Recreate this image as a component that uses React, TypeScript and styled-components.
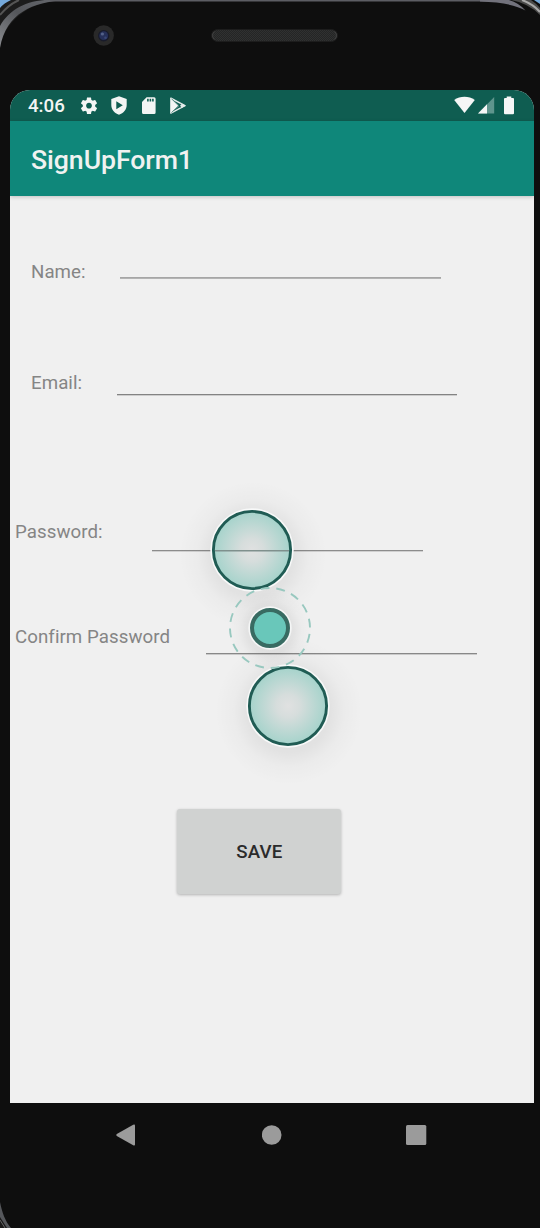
import React from 'react';
import styled, { createGlobalStyle } from 'styled-components';

const GlobalStyle = createGlobalStyle`
  html, body { margin: 0; padding: 0; background: #0e0e0e; }
  * { box-sizing: border-box; }
`;

const Phone = styled.div`
  position: relative;
  display: flex;
  flex-direction: column;
  width: 540px;
  height: 1228px;
  padding: 0 6px 0 10px;
  overflow: hidden;
  background: #0e0e0e;
  font-family: Roboto, "Liberation Sans", sans-serif;
`;

const Shell = styled.svg`
  position: absolute;
  inset: 0;
  pointer-events: none;
`;

const Bezel = styled.div`
  flex: none;
  height: 90px;
  display: flex;
  align-items: flex-start;
  padding: 25px 0 0 83px;
`;

const Camera = styled.svg`
  flex: none;
  margin-right: 97px;
`;

const Speaker = styled.svg`
  flex: none;
  margin-top: 4px;
`;

const Screen = styled.main`
  flex: none;
  position: relative;
  display: flex;
  flex-direction: column;
  height: 1013px;
  border-radius: 20px 20px 0 0;
  overflow: hidden;
  background: #f0f0f0;
`;

const StatusBar = styled.div`
  flex: none;
  display: flex;
  align-items: center;
  height: 31px;
  padding: 0 19px 0 18px;
  background: #0f5d51;
  color: #f3f5f4;
`;

const Clock = styled.span`
  width: 50px;
  padding-top: 1px;
  font-size: 18.7px;
  font-weight: 500;
  line-height: 30px;
`;

const StatusIcons = styled.div`
  display: flex;
  align-items: center;
  gap: 7.8px;
`;

const SystemIcons = styled.svg`
  margin-left: auto;
`;

const AppBar = styled.header`
  flex: none;
  position: relative;
  display: flex;
  align-items: center;
  height: 75px;
  padding: 3px 21px 0;
  background: #0f877a;
  box-shadow: 0 1px 4px rgba(0, 0, 0, 0.2);
`;

const Title = styled.h1`
  margin: 0;
  font-size: 26.7px;
  font-weight: 500;
  line-height: 32px;
  letter-spacing: -0.08px;
  color: #f0f2f1;
`;

const Form = styled.form`
  flex: 1;
  display: flex;
  flex-direction: column;
  align-items: flex-start;
  padding-top: 64px;
`;

const Row = styled.div<{ $height: number; $indent: number; $after: number }>`
  display: flex;
  align-items: stretch;
  height: ${(p) => p.$height}px;
  padding-left: ${(p) => p.$indent}px;
  margin-bottom: ${(p) => p.$after}px;
`;

const Label = styled.label<{ $width: number; $drop: number }>`
  width: ${(p) => p.$width}px;
  padding-top: ${(p) => p.$drop}px;
  font-size: 18.7px;
  line-height: 22px;
  letter-spacing: 0.06px;
  white-space: nowrap;
  color: #858585;
`;

const Field = styled.input<{ $width: number; $tone: string; $edge: string }>`
  width: ${(p) => p.$width}px;
  height: 100%;
  padding: 0;
  border: 0;
  border-radius: 0;
  border-bottom: 1px solid ${(p) => p.$tone};
  box-shadow: 0 1px 0 ${(p) => p.$edge};
  outline: 0;
  background: transparent;
  font: inherit;
`;

const SaveButton = styled.button`
  width: 164px;
  height: 85px;
  margin-left: 167.4px;
  padding: 1px 0 0;
  border: 0;
  border-radius: 3px;
  background: #d0d2d1;
  box-shadow: 0 1px 3px rgba(0, 0, 0, 0.26);
  font-family: inherit;
  font-size: 18.7px;
  font-weight: 500;
  letter-spacing: 0.15px;
  color: #2b2b2b;
`;

const Touches = styled.svg`
  position: absolute;
  left: 170px;
  top: 370px;
  pointer-events: none;
`;

const NavBar = styled.nav`
  flex: none;
  display: flex;
  align-items: center;
  height: 64px;
  padding-left: 105px;
`;

const NavIcon = styled.svg<{ $gap?: number }>`
  margin-right: ${(p) => p.$gap ?? 0}px;
  fill: #9b9b9b;
`;

const fields = [
  { id: 'name', label: 'Name:', type: 'text', indent: 21, labelWidth: 89, drop: 1, width: 321, height: 18, after: 94, tone: '#a6a6a6', edge: '#b4b4b4' },
  { id: 'email', label: 'Email:', type: 'text', indent: 21, labelWidth: 86, drop: 0, width: 340, height: 23, after: 125, tone: '#838383', edge: '#cdcdcd' },
  { id: 'password', label: 'Password:', type: 'password', indent: 5, labelWidth: 137, drop: 1, width: 271, height: 31, after: 75, tone: '#8c8c8c', edge: '#d0d0d0' },
  { id: 'confirm', label: 'Confirm Password', type: 'password', indent: 5, labelWidth: 191, drop: 0, width: 271, height: 28, after: 155, tone: '#888888', edge: '#cacaca' },
];

function TouchPoint({ cx, cy }: { cx: number; cy: number }) {
  return (
    <g>
      <circle cx={cx} cy={cy} r="41.7" fill="#f8f9f9" />
      <circle cx={cx} cy={cy} r="38.6" fill="url(#touchFill)" stroke="#205c54" strokeWidth="2.9" />
    </g>
  );
}

export default function App() {
  return (
    <Phone>
      <GlobalStyle />
      <Bezel>
        <Camera width="21" height="21" viewBox="0 0 21 21">
          <circle cx="10.7" cy="10.5" r="10.2" fill="#292929" />
          <circle cx="10.7" cy="10.7" r="5.7" fill="#181b2b" />
          <circle cx="10.7" cy="10.7" r="4.4" fill="#26305a" />
          <circle cx="9.4" cy="9" r="1.6" fill="#536189" />
          <circle cx="12.5" cy="12.8" r="1.3" fill="#394777" />
        </Camera>
        <Speaker width="127" height="13" viewBox="0 0 127 13">
          <defs>
            <pattern id="mesh" width="2" height="2" patternUnits="userSpaceOnUse">
              <rect width="2" height="2" fill="#242525" />
              <rect width="1" height="1" fill="#303131" />
              <rect x="1" y="1" width="1" height="1" fill="#303131" />
            </pattern>
          </defs>
          <rect x="0.5" y="0.5" width="126" height="12" rx="6" fill="url(#mesh)" stroke="#1d1d1d" />
          <path d="M3.5 2.5Q1.5 4 1.5 6.5T3.5 10.5M123.5 2.5Q125.5 4 125.5 6.5T123.5 10.5" fill="none" stroke="#484848" strokeWidth=".8" />
        </Speaker>
      </Bezel>

      <Screen>
        <StatusBar>
          <Clock>4:06</Clock>
          <StatusIcons>
            <svg width="22" height="22" viewBox="0 0 24 24" fill="currentColor">
              <path d="M19.43 12.98c.04-.32.07-.64.07-.98s-.03-.66-.07-.98l2.11-1.65c.19-.15.24-.42.12-.64l-2-3.46c-.12-.22-.39-.3-.61-.22l-2.49 1c-.52-.4-1.08-.73-1.69-.98l-.38-2.65C14.46 2.18 14.25 2 14 2h-4c-.25 0-.46.18-.49.42l-.38 2.65c-.61.25-1.17.59-1.69.98l-2.49-1c-.23-.09-.49 0-.61.22l-2 3.46c-.13.22-.07.49.12.64l2.11 1.65c-.04.32-.07.65-.07.98s.03.66.07.98l-2.11 1.65c-.19.15-.24.42-.12.64l2 3.46c.12.22.39.3.61.22l2.49-1c.52.4 1.08.73 1.69.98l.38 2.65c.03.24.24.42.49.42h4c.25 0 .46-.18.49-.42l.38-2.65c.61-.25 1.17-.59 1.69-.98l2.49 1c.23.09.49 0 .61-.22l2-3.46c.12-.22.07-.49-.12-.64l-2.11-1.65zM12 15.5c-1.93 0-3.5-1.57-3.5-3.5s1.57-3.5 3.5-3.5 3.5 1.57 3.5 3.5-1.57 3.5-3.5 3.5z" transform="translate(12 11.7) scale(.9) translate(-12 -12)" />
            </svg>
            <svg width="22" height="22" viewBox="0 0 22 22" fill="currentColor">
              <path fillRule="evenodd" d="M11 1.2 18.7 4.1V10C18.7 14.5 15.5 18.2 11 19.7C6.5 18.2 3.3 14.5 3.3 10V4.1ZM8.3 6.2V14.2L14.8 10.2Z" />
            </svg>
            <svg width="22" height="22" viewBox="0 0 22 22" fill="currentColor">
              <path fillRule="evenodd" d="M8.600 2.300H16.100Q17.600 2.300 17.600 3.800V17.600Q17.600 19.100 16.100 19.100H5.500Q4 19.100 4 17.600V7ZM9.100 3.700V6.400H10.700V3.700ZM11.600 3.700V6.400H13.200V3.700ZM14.100 3.700V6.400H15.700V3.700Z" />
            </svg>
            <svg width="22" height="22" viewBox="0 0 22 22">
              <path d="M3.200 2.800 12.200 10.700 3.200 18.600Z" fill="#f3f5f4" />
              <path d="M3.400 3 18 10.700 3.400 18.400" fill="none" stroke="#e4ebea" strokeWidth="1.5" strokeLinejoin="round" />
              <path d="M4.500 3.700 13.300 12.600M4.500 17.700 13.300 8.800" fill="none" stroke="#0f5d51" strokeWidth=".6" />
              <path d="M15 8.800 18.600 10.700 15 12.700 13 10.700Z" fill="#e4ebea" />
            </svg>
          </StatusIcons>
          <SystemIcons width="61" height="20" viewBox="0 0 61 20">
            <path d="M0.200 4C6 -.3 15 -.3 20.800 4L10.500 16.900Z" fill="#f5f6f6" />
            <path d="M40.200 1V17.500H24Z" fill="#5f958d" />
            <path d="M33 8.300V17.500H24Z" fill="#f5f6f6" />
            <path d="M52.700 .5H57.300V2H59Q60 2 60 3V17.200Q60 18.300 59 18.300H51Q50 18.300 50 17.200V3Q50 2 51 2H52.700Z" fill="#f5f6f6" />
          </SystemIcons>
        </StatusBar>

        <AppBar>
          <Title>SignUpForm1</Title>
        </AppBar>

        <Form onSubmit={(e: React.FormEvent) => e.preventDefault()}>
          {fields.map((f) => (
            <Row key={f.id} $height={f.height} $indent={f.indent} $after={f.after}>
              <Label htmlFor={f.id} $width={f.labelWidth} $drop={f.drop}>{f.label}</Label>
              <Field id={f.id} type={f.type} $width={f.width} $tone={f.tone} $edge={f.edge} />
            </Row>
          ))}
          <SaveButton type="submit">SAVE</SaveButton>
        </Form>

        <Touches width="180" height="350" viewBox="180 460 180 350">
          <defs>
            <radialGradient id="touchFill">
              <stop offset="0" stopColor="#e0e1e1" />
              <stop offset=".3" stopColor="#d6dddc" />
              <stop offset="1" stopColor="#a5d3cb" />
            </radialGradient>
            <radialGradient id="shadow">
              <stop offset="0" stopColor="#000" stopOpacity=".07" />
              <stop offset=".55" stopColor="#000" stopOpacity=".06" />
              <stop offset=".75" stopColor="#000" stopOpacity=".02" />
              <stop offset="1" stopColor="#000" stopOpacity="0" />
            </radialGradient>
          </defs>
          <circle cx="253" cy="555" r="74" fill="url(#shadow)" />
          <circle cx="289" cy="711" r="74" fill="url(#shadow)" />
          <circle cx="270" cy="631" r="42" fill="url(#shadow)" />
          <TouchPoint cx={252} cy={550} />
          <TouchPoint cx={288} cy={706} />
          <path d="M215 550.7H289" stroke="#7f908d" strokeWidth="1.5" />
          <circle cx="270" cy="628" r="40" fill="none" stroke="#98c8bf" strokeWidth="1.9" strokeDasharray="8.9 6.808" strokeDashoffset="-6" />
          <circle cx="270" cy="628" r="21.7" fill="#f5f6f6" />
          <circle cx="270" cy="628" r="18" fill="#69c7ba" stroke="#386b62" strokeWidth="4" />
        </Touches>
      </Screen>

      <NavBar>
        <NavIcon $gap={125} width="22" height="24" viewBox="0 0 22 24">
          <path d="M1.800 11.100 18.200 1.700Q20 1 20 2.500V21.500Q20 23.100 18.200 22.300L1.800 13.100Q.6 12.200 1.800 11.100Z" />
        </NavIcon>
        <NavIcon $gap={124} width="20" height="20" viewBox="0 0 20 20">
          <circle cx="9.7" cy="10" r="9.8" />
        </NavIcon>
        <NavIcon width="21" height="20" viewBox="0 0 21 20">
          <rect width="20.3" height="20" rx="1.5" />
        </NavIcon>
      </NavBar>

      <Shell width="540" height="1228" viewBox="0 0 540 1228">
        <defs>
          <linearGradient id="rim" x1="0" y1="1" x2="1" y2="0">
            <stop offset="0" stopColor="#8a8c90" />
            <stop offset=".5" stopColor="#55575b" />
            <stop offset="1" stopColor="#66686e" />
          </linearGradient>
        </defs>
        <path d="M0 0H60C33 2 10 16 0 43Z" fill="#1c1c1c" />
        <path d="M0 15Q8 5 19 0" fill="none" stroke="#555" strokeWidth="2" />
        <path d="M0 0H11Q4 3 0 8Z" fill="#75a9db" />
        <path d="M0 26C9 10 26 0 49 0H65C33 2 6 13 0 48Z" fill="url(#rim)" />
        <path d="M50 0H500V1.500H50Z" fill="#5c5d63" />
        <path d="M480 0H509Q519 3 525.500 10.500Q512 2.500 480 1.500Z" fill="#72727c" />
        <path d="M511 0H531Q537 4 540 8V15Q528 3 511 0Z" fill="#4b4b4b" />
        <path d="M522 0Q533 4 540 12" fill="none" stroke="#a9a9a9" strokeWidth="2" />
        <path d="M534 0H540V4Z" fill="#75a9db" />
        <path d="M0 1202C2 1212 5 1221 11 1228H0Z" fill="#55575b" />
        <path d="M0 1217 7 1228H0Z" fill="#1a1a1a" />
        <path d="M0 1220 5 1228" stroke="#666" strokeWidth="1" />
      </Shell>
    </Phone>
  );
}
